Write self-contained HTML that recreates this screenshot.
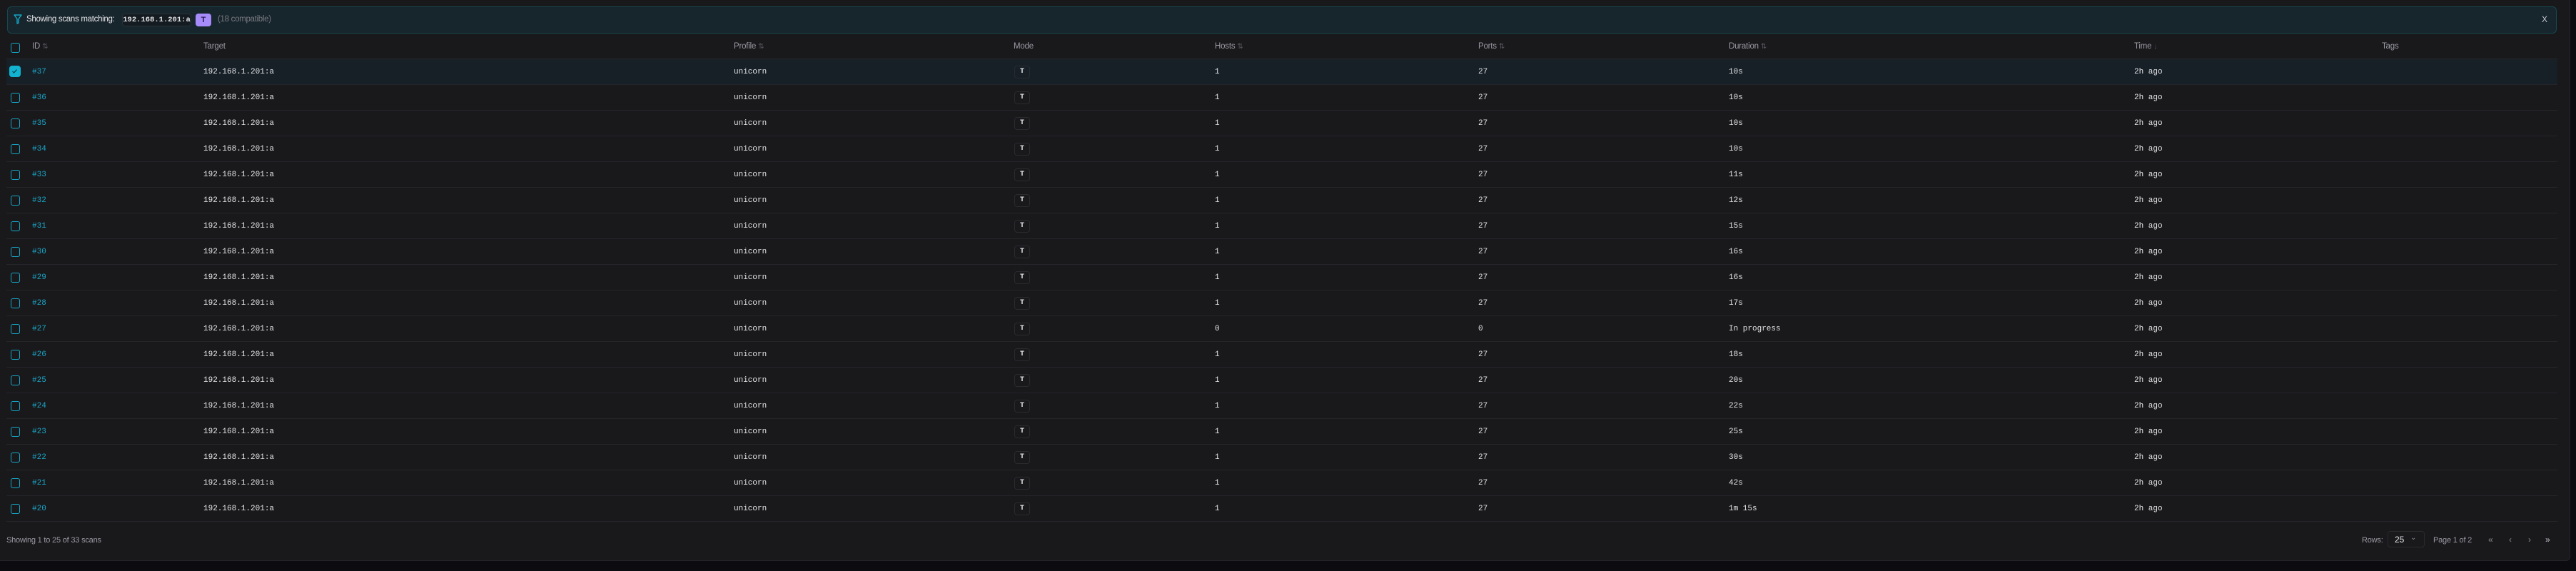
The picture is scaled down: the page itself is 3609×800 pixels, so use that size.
<!DOCTYPE html><html><head><style>
*{box-sizing:border-box;margin:0;padding:0}
body{width:3609px;height:800px;background:#0b0b10;font-family:"Liberation Sans",sans-serif;position:relative;overflow:hidden}
#panel{position:absolute;left:0;top:0;width:3601px;height:786px;background:#19191c;border-radius:0 0 6px 0;border-right:1px solid #26262a;border-bottom:1px solid #26262a}
.ban{position:absolute;left:10px;top:9px;width:3572px;height:38px;background:#17252c;border:1px solid #164850;border-radius:6px}
.a{position:absolute;white-space:nowrap}
.h{font-size:11.5px;color:#9a9aa3;top:59px;letter-spacing:-0.2px}
.m{font-family:"Liberation Mono",monospace;font-size:11px;color:#e4e4e7}
.row{position:absolute;left:9px;width:3574px;height:36px;border-bottom:1px solid #26262a}
.cb{position:absolute;left:6px;top:11px;width:13px;height:14px;border:1.5px solid #16a5c4;border-radius:3px}
.id{position:absolute;left:36px;top:12px;font-family:"Liberation Mono",monospace;font-size:11px;color:#1aa6c6}
.c{position:absolute;top:12px}
.badge{position:absolute;left:1412px;top:9px;width:22px;height:18px;border:1px solid #2a2a2f;border-radius:4px;font-family:"Liberation Mono",monospace;font-size:10px;color:#e4e4e7;text-align:center;line-height:16px;font-weight:bold}
.ar{color:#55555c;font-size:10px}
.s{font-size:11px;letter-spacing:-0.2px}
</style></head><body>
<div id="panel"></div>
<div class="ban"></div>
<svg class="a" style="left:19px;top:20px" width="12" height="14" viewBox="0 0 12 14"><path d="M1 1h10L7 6.5V12L5 13V6.5Z" fill="none" stroke="#16a5c4" stroke-width="1.4" stroke-linejoin="round"/></svg>
<div class="a" style="left:37px;top:21px;font-size:11.5px;letter-spacing:-0.3px;color:#e4e4e7">Showing scans matching:</div>
<div class="a" style="left:171px;top:19px;width:97px;height:18px;border:1px solid #263238;border-radius:4px;background:#141c21;font-family:'Liberation Mono',monospace;font-size:10.5px;font-weight:bold;color:#e4e4e7;text-align:center;line-height:16px">192.168.1.201:a</div>
<div class="a" style="left:274px;top:19px;width:22px;height:18px;background:#a78bfa;border-radius:4px;font-size:11px;font-weight:bold;color:#2a1d55;text-align:center;line-height:18px">T</div>
<div class="a" style="left:305px;top:21px;font-size:11.5px;letter-spacing:-0.3px;color:#7a7a82">(18 compatible)</div>
<div class="a" style="left:3561px;top:20px;font-size:12px;color:#c4c4cc">X</div>
<div class="a" style="left:15px;top:60px;width:13px;height:14px;border:1.5px solid #16a5c4;border-radius:3px"></div>
<div class="a h" style="left:45px">ID <span class="ar">⇅</span></div>
<div class="a h" style="left:285px">Target</div>
<div class="a h" style="left:1028px">Profile <span class="ar">⇅</span></div>
<div class="a h" style="left:1420px">Mode</div>
<div class="a h" style="left:1702px">Hosts <span class="ar">⇅</span></div>
<div class="a h" style="left:2071px">Ports <span class="ar">⇅</span></div>
<div class="a h" style="left:2422px">Duration <span class="ar">⇅</span></div>
<div class="a h" style="left:2990px">Time <span class="ar">↓</span></div>
<div class="a h" style="left:3337px">Tags</div>
<div class="a" style="left:9px;top:82px;width:3574px;height:1px;background:#26262a"></div>
<div id="rows"></div>
<div class="a s" style="left:9px;top:751px;color:#9a9aa3">Showing 1 to 25 of 33 scans</div>
<div class="a s" style="left:3309px;top:751px;color:#9a9aa3">Rows:</div>
<div class="a" style="left:3345px;top:744px;width:52px;height:23px;border:1px solid #2a2a2f;border-radius:4px"></div>
<div class="a" style="left:3355px;top:749px;font-size:12px;color:#e4e4e7">25</div>
<div class="a" style="left:3377px;top:748px;font-size:10px;color:#8a8a92">⌄</div>
<div class="a s" style="left:3409px;top:751px;color:#9a9aa3">Page 1 of 2</div>
<div class="a" style="left:3486px;top:749px;font-size:12px;color:#8a8a92">«</div>
<div class="a" style="left:3515px;top:749px;font-size:12px;color:#8a8a92">‹</div>
<div class="a" style="left:3542px;top:749px;font-size:12px;color:#8a8a92">›</div>
<div class="a" style="left:3566px;top:749px;font-size:12px;color:#c4c4cc">»</div>
<script>
var d=[["37",1,27,"10s"],["36",1,27,"10s"],["35",1,27,"10s"],["34",1,27,"10s"],["33",1,27,"11s"],["32",1,27,"12s"],["31",1,27,"15s"],["30",1,27,"16s"],["29",1,27,"16s"],["28",1,27,"17s"],["27",0,0,"In progress"],["26",1,27,"18s"],["25",1,27,"20s"],["24",1,27,"22s"],["23",1,27,"25s"],["22",1,27,"30s"],["21",1,27,"42s"],["20",1,27,"1m 15s"]];
var h="";d.forEach(function(r,i){var t=83+i*36;var sel=i==0;
h+='<div class="row" style="top:'+t+'px;'+(sel?'background:#172027':'')+'">'+
(sel?'<div class="cb" style="left:4px;top:9px;width:16px;height:16px;background:#12b3d1;border-color:#12b3d1;border-radius:4px"><svg width="13" height="13" viewBox="0 0 13 13" style="position:absolute;left:0;top:0"><path d="M3.5 7l2 2 4-4.5" stroke="#0b3a45" stroke-width="1.2" fill="none"/></svg></div>':'<div class="cb"></div>')+
'<div class="id">#'+r[0]+'</div>'+
'<div class="c m" style="left:276px">192.168.1.201:a</div>'+
'<div class="c m" style="left:1019px">unicorn</div>'+
'<div class="badge">T</div>'+
'<div class="c m" style="left:1693px">'+r[1]+'</div>'+
'<div class="c m" style="left:2062px">'+r[2]+'</div>'+
'<div class="c m" style="left:2413px">'+r[3]+'</div>'+
'<div class="c m" style="left:2981px">2h ago</div></div>';});
document.getElementById("rows").innerHTML=h;
</script>
</body></html>
